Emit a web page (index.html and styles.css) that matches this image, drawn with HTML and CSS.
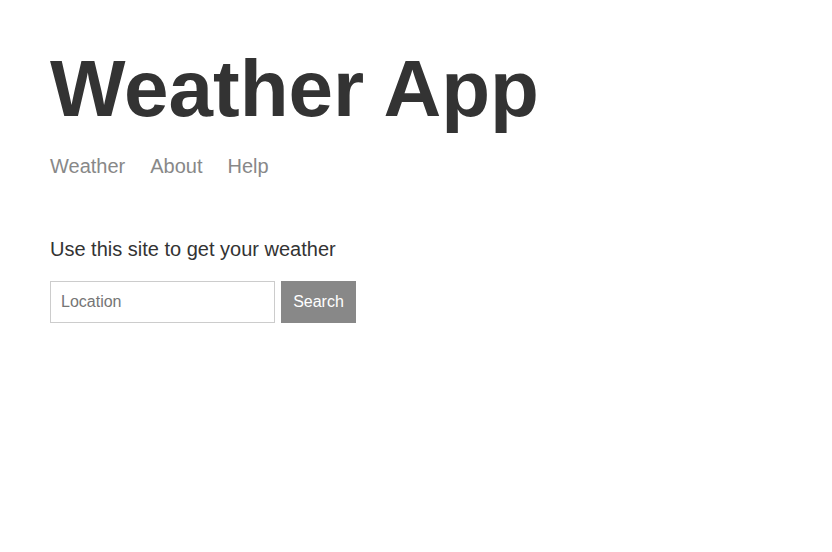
FILE: index.html
```html
<!DOCTYPE html>
<html>
<head>
<meta charset="utf-8">
<title>Weather App</title>
<link rel="stylesheet" href="styles.css">
</head>
<body>
<header class="header">
  <h1 class="title">Weather App</h1>
  <nav class="nav">
    <a class="nav-link" href="#">Weather</a>
    <a class="nav-link" href="#">About</a>
    <a class="nav-link" href="#">Help</a>
  </nav>
</header>
<main class="main">
  <p class="intro">Use this site to get your weather</p>
  <form class="search-form">
    <input class="search-input" type="text" placeholder="Location">
    <button class="search-button" type="button">Search</button>
  </form>
</main>
</body>
</html>
```
FILE: styles.css
```css
html, body {
  margin: 0;
  background: #fff;
}
body {
  padding: 43px 50px;
  color: #333;
  font-family: "Liberation Sans", Arial, sans-serif;
  font-size: 20px;
}
.title {
  margin: 0;
  font-size: 80px;
  line-height: 92px;
  font-weight: bold;
  color: #333;
}
.nav {
  margin-top: 20px;
  display: flex;
  gap: 25px;
  line-height: 23px;
}
.nav-link {
  color: #888;
  text-decoration: none;
}
.main {
  margin-top: 60px;
}
.intro {
  margin: 0;
  line-height: 23px;
}
.search-form {
  margin-top: 20px;
  display: flex;
  gap: 6px;
}
.search-input {
  box-sizing: border-box;
  width: 225px;
  height: 42px;
  border: 1px solid #ccc;
  padding: 0 10px;
  font-family: "Liberation Sans", Arial, sans-serif;
  font-size: 16px;
  color: #333;
  outline: none;
  margin: 0;
}
.search-input::placeholder {
  color: #757575;
}
.search-button {
  box-sizing: border-box;
  width: 75px;
  height: 42px;
  border: 1px solid #888;
  background: #888;
  color: #fff;
  font-family: "Liberation Sans", Arial, sans-serif;
  font-size: 16px;
  padding: 0;
  margin: 0;
  cursor: pointer;
}
```
